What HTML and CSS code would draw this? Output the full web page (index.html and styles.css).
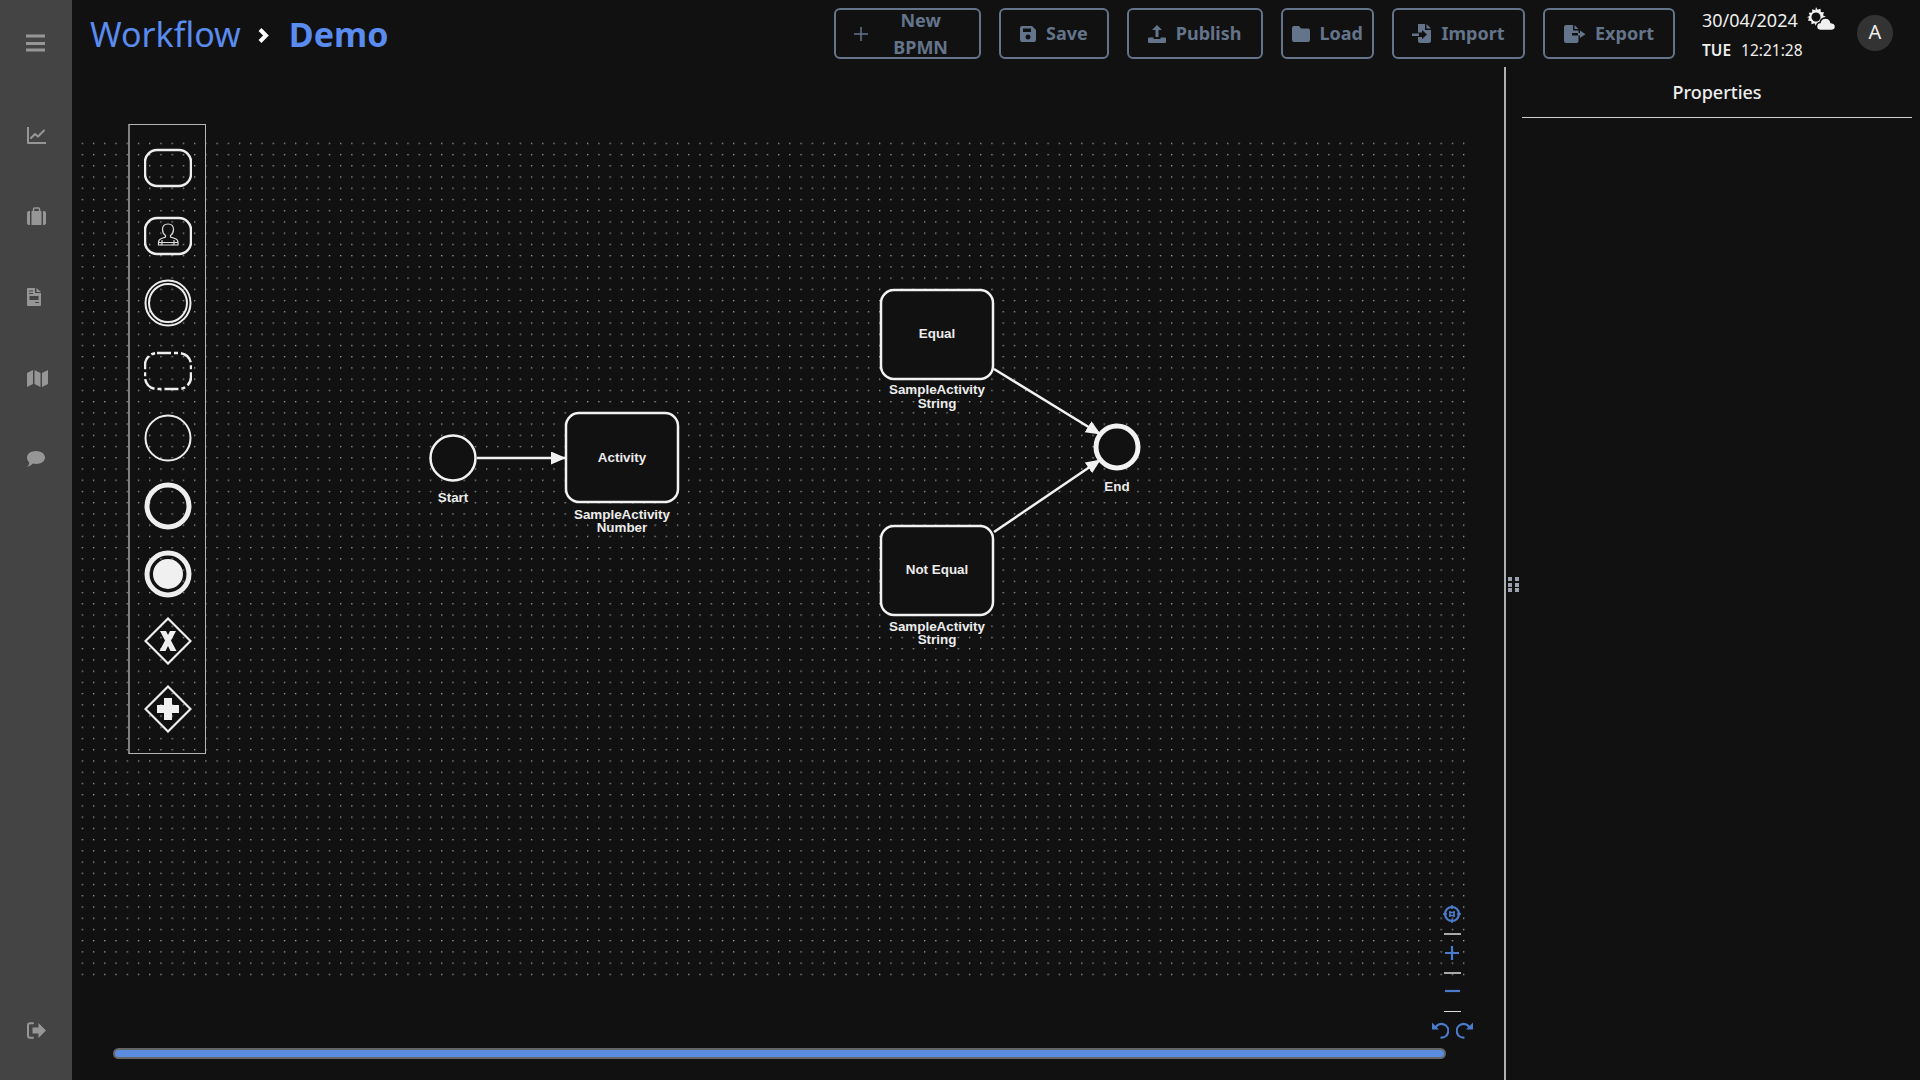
FILE: index.html
```html
<!DOCTYPE html>
<html lang="en">
<head>
    <meta charset="UTF-8">
    <meta name="viewport" content="width=device-width, initial-scale=1.0">
    <title>Workflow - Demo</title>
    <link rel="stylesheet" href="styles.css">
</head>
<body>

    <!-- Side menu -->
    <aside class="sidebar">
        <div class="menu-toggle">
            <svg width="19" height="18" viewBox="0 0 19 18"><path d="M0 2h19M0 9.500h19M0 16h19" class="ln3"/></svg>
        </div>
        <nav class="side-nav">
            <a class="side-item"><svg width="19" height="17" viewBox="0 0 19 17"><path d="M1 0v16h18M4 11l4-4 3 2.500 6-6" class="ln2"/></svg></a>
            <a class="side-item"><svg width="19" height="18" viewBox="0 0 19 18"><path d="M6.500 4V2q0-1 1-1h4q1 0 1 1v2" class="ln15"/><path d="M0 6q0-2 2-2h1v14H2q-2 0-2-2zM4.500 4h10v14h-10zM16 4h1q2 0 2 2v10q0 2-2 2h-1z" class="fill"/></svg></a>
            <a class="side-item"><svg width="14" height="18" viewBox="0 0 14 18"><path fill-rule="evenodd" d="M1 0h7v5h6v12q0 1-1 1H1q-1 0-1-1V1q0-1 1-1zM9.500 0L14 4H9.500zM2.500 8v4h9V8zM2 2.500v1h4v-1zM2 5v1h4V5zM8 14v1h4v-1z" class="fill"/></svg></a>
            <a class="side-item"><svg width="21" height="17" viewBox="0 0 21 17"><path d="M0 3l6-3v14l-6 3zM7.500 0l6 3v14l-6-3zM15 3l6-3v14l-6 3z" class="fill"/></svg></a>
            <a class="side-item"><svg width="18" height="16" viewBox="0 0 18 16"><path d="M9 0c5 0 9 2.800 9 6.500S14 13 9 13q-1.500 0-3-.4C4.500 14 2.500 15.500 0 16c1.200-1.200 2-2.600 2.300-4.600C.9 10.200 0 8.500 0 6.500 0 2.800 4 0 9 0z" class="fill"/></svg></a>
        </nav>
        <a class="side-item side-bottom"><svg width="19" height="17" viewBox="0 0 19 17"><path d="M6 1.200H3q-2 0-2 2v10.600q0 2 2 2h3" class="ln2"/><path d="M11.500 1L19 8.500 11.500 16v-4.500H5.500v-6h6z" class="fill"/></svg></a>
    </aside>

    <div class="main">

        <!-- Header -->
        <header class="topbar">
            <h1 class="crumbs">
                <span class="crumb-root">Workflow</span>
                <svg class="crumb-sep" width="11" height="15" viewBox="0 0 11 15"><path d="M2 1.500l6 6-6 6" class="ln-chev"/></svg>
                <span class="crumb-page">Demo</span>
            </h1>
            <div class="actions">
                <button class="btn btn-new" type="button">
                    <svg width="18" height="18" viewBox="0 0 18 18"><path d="M9 2v14M2 9h14" class="ln15"/></svg>
                    <span>New<br>BPMN</span>
                </button>
                <button class="btn" type="button">
                    <svg width="16" height="16" viewBox="0 0 16 16"><path fill-rule="evenodd" d="M2 0h10l4 4v10q0 2-2 2H2q-2 0-2-2V2q0-2 2-2zM3 2.500v3.500h8V2.500zM8 8.500a2.500 2.500 0 1 0 .01 0z" class="fill"/></svg>
                    <span>Save</span>
                </button>
                <button class="btn" type="button">
                    <svg width="18" height="18" viewBox="0 0 18 18"><path d="M9 0l5 5h-3.500v7h-3V5H4z" class="fill"/><path d="M0 13.500q0-1 1-1h4.500v1.500h7v-1.500H17q1 0 1 1V17q0 1-1 1H1q-1 0-1-1z" class="fill"/></svg>
                    <span>Publish</span>
                </button>
                <button class="btn btn-load" type="button">
                    <svg width="18" height="16" viewBox="0 0 18 16"><path d="M2 0h5l2 2.500h7q2 0 2 2V14q0 2-2 2H2q-2 0-2-2V2q0-2 2-2z" class="fill"/></svg>
                    <span>Load</span>
                </button>
                <button class="btn btn-import" type="button">
                    <svg width="19" height="19" viewBox="0 0 19 19"><path d="M6 0h7v6h6v11q0 2-2 2H8q-2 0-2-2v-4h4v2l5-4.500L10 6v2.500H6z" class="fill"/><path d="M14.500 0L19 4.500h-4.500zM0 9.500h7v2.500H0z" class="fill"/></svg>
                    <span>Import</span>
                </button>
                <button class="btn btn-export" type="button">
                    <svg width="22" height="18" viewBox="0 0 22 18"><path d="M2 0h7v5.500h5.500v2.500H8v2.500h6.500V16q0 2-2 2H2q-2 0-2-2V2q0-2 2-2z" class="fill"/><path d="M10.500 0l4 4h-4zM16 5.500l5.500 3.700L16 13v-2.500h-2V8h2z" class="fill"/></svg>
                    <span>Export</span>
                </button>
            </div>
            <div class="clock">
                <div class="clock-date">
                    <span>30/04/2024</span>
                    <svg width="29" height="24" viewBox="0 0 29 24"><path fill-rule="evenodd" d="M9 0l1.500 2.800 3-1 .3 3.200 3.200.3-1 3 2.800 1.500-2.800 1.500 1 3-3.200.3-.3 3.200-3-1L9 19l-1.500-2.800-3 1-.3-3.200-3.200-.3 1-3L0 10.200l2.800-1.500-1-3 3.200-.3.300-3.200 3 1zM9 5.500a4.500 4.500 0 1 0 .01 0z" class="fill-white"/><path d="M14 23.500q-4.500 0-4.500-4 0-3.500 3.500-4 1-4.500 5.500-4.500 4.500 0 5.500 4.500 4.500.5 4.500 4.200 0 3.800-4.500 3.800z" class="fill-white cloud"/></svg>
                </div>
                <div class="clock-time"><b>TUE</b><span>12:21:28</span></div>
            </div>
            <div class="avatar">A</div>
        </header>

        <div class="work">

            <!-- Diagram area -->
            <section class="canvas">
                <svg class="diagram" width="1432" height="1013" viewBox="72 67 1432 1013">
                    <defs>
                        <pattern id="dots" x="81.700" y="142.700" width="11.230" height="11.230" patternUnits="userSpaceOnUse">
                            <rect width="1.300" height="1.300" fill="#a0a0a0"/>
                        </pattern>
                        <marker id="arrow" markerWidth="15" markerHeight="14" refX="14" refY="6.500" orient="auto" markerUnits="userSpaceOnUse">
                            <path d="M0 0L15 6.500 0 13z" fill="#f2f2f2"/>
                        </marker>
                    </defs>
                    <rect x="81" y="142" width="1390" height="836" fill="url(#dots)"/>

                    <path d="M477 458H565" class="edge" marker-end="url(#arrow)"/>
                    <path d="M994 369L1100 434" class="edge" marker-end="url(#arrow)"/>
                    <path d="M994 532L1100 460" class="edge" marker-end="url(#arrow)"/>

                    <circle cx="453" cy="458" r="22.500" class="node"/>
                    <text x="453" y="502.300" class="lbl">Start</text>

                    <rect x="566" y="413" width="112" height="89" rx="13" class="node"/>
                    <text x="622" y="462" class="lbl">Activity</text>
                    <text x="622" y="518.500" class="lbl">SampleActivity</text>
                    <text x="622" y="532" class="lbl">Number</text>

                    <rect x="881" y="290" width="112" height="89" rx="13" class="node"/>
                    <text x="937" y="338" class="lbl">Equal</text>
                    <text x="937" y="394" class="lbl">SampleActivity</text>
                    <text x="937" y="407.500" class="lbl">String</text>

                    <rect x="881" y="526" width="112" height="89" rx="13" class="node"/>
                    <text x="937" y="574" class="lbl">Not Equal</text>
                    <text x="937" y="630.500" class="lbl">SampleActivity</text>
                    <text x="937" y="644" class="lbl">String</text>

                    <circle cx="1117" cy="447" r="21" class="node node-end"/>
                    <text x="1117" y="491.300" class="lbl">End</text>
                </svg>

                <!-- Shape palette -->
                <div class="palette">
                    <svg width="48" height="40" viewBox="0 0 48 40"><rect x="1" y="2" width="46" height="36" rx="12" class="shp"/></svg>
                    <svg width="48" height="40" viewBox="0 0 48 40">
                        <rect x="1" y="2" width="46" height="36" rx="12" class="shp"/>
                        <path d="M18.500 13.500c0-3.500 2-5.500 5.500-5.500s5.500 2 5.500 5.500c0 2.500-1 4.500-3 6v1.500l4.500 1.500q3 1 3 4v2.500H14.500V26.500q0-3 3-4l4-1.500v-1.500c-2-1.500-3-3.500-3-6zM18 29v-5M30 29v-5M14.500 26.500h19" class="shp-thin"/>
                    </svg>
                    <svg width="48" height="48" viewBox="0 0 48 48"><circle cx="24" cy="24" r="22.500" class="shp-ring"/><circle cx="24" cy="24" r="19" class="shp-ring"/></svg>
                    <svg width="48" height="40" viewBox="0 0 48 40"><rect x="1" y="2" width="46" height="36" rx="12" class="shp shp-dash"/></svg>
                    <svg width="48" height="48" viewBox="0 0 48 48"><circle cx="24" cy="24" r="22.500" class="shp-ring"/></svg>
                    <svg width="48" height="48" viewBox="0 0 48 48"><circle cx="24" cy="24" r="21" class="shp-thick"/></svg>
                    <svg width="48" height="48" viewBox="0 0 48 48"><circle cx="24" cy="24" r="21" class="shp-thick"/><circle cx="24" cy="24" r="15" class="fill-white"/></svg>
                    <svg width="48" height="48" viewBox="0 0 48 48"><path d="M24 1.500L46.500 24 24 46.500 1.500 24z" class="shp shp-diamond"/><path d="M16 14h6l2 4 2-4h6l-5 9.500 5.500 10.500h-6L24 29l-2.500 5h-6L21 23.500z" class="fill-white"/></svg>
                    <svg width="48" height="48" viewBox="0 0 48 48"><path d="M24 1.500L46.500 24 24 46.500 1.500 24z" class="shp shp-diamond"/><path d="M20 13h8v7h7v8h-7v7h-8v-7h-7v-8h7z" class="fill-white"/></svg>
                </div>

                <!-- Zoom controls -->
                <div class="zoom-tools">
                    <svg width="18" height="18" viewBox="0 0 18 18"><circle cx="9" cy="9" r="7" class="ln-blue"/><path d="M9 0v4M9 14v4M0 9h4M14 9h4M7 6v6M11 6v6M6 7.500h6M6 10.500h6" class="ln-blue-thin"/></svg>
                    <i class="zoom-line"></i>
                    <svg width="16" height="16" viewBox="0 0 16 16"><path d="M8 1v14M1 8h14" class="ln-blue"/></svg>
                    <i class="zoom-line zoom-line-mid"></i>
                    <svg width="16" height="16" viewBox="0 0 16 16"><path d="M1 8h15" class="ln-blue"/></svg>
                    <i class="zoom-line zoom-line-thin"></i>
                    <div class="undo-redo">
                        <svg width="17" height="17" viewBox="0 0 17 17"><path d="M3.500 5.500A6.800 6.800 0 1 1 8.500 15.500" class="ln-blue"/><path d="M0 0.500v7h7z" class="fill-blue"/></svg>
                        <svg width="17" height="17" viewBox="0 0 17 17"><path d="M13.500 5.500A6.800 6.800 0 1 0 8.500 15.500" class="ln-blue"/><path d="M17 0.500v7h-7z" class="fill-blue"/></svg>
                    </div>
                </div>

                <div class="scroll-thumb"></div>
            </section>

            <!-- Properties panel -->
            <aside class="props">
                <div class="grip">
                    <i></i><i></i><i></i><i></i><i></i><i></i>
                </div>
                <h2 class="props-title">Properties</h2>
            </aside>
        </div>
    </div>

</body>
</html>
```

FILE: styles.css
```css
* {
    box-sizing: border-box;
}
html, body {
    height: 100%;
}
body {
    margin: 0;
    display: flex;
    height: 1080px;
    overflow: hidden;
    background-color: #111;
    color: #eee;
    font-family: "Noto Sans", sans-serif;
}
/* Side menu */
.sidebar {
    width: 72px;
    flex: none;
    display: flex;
    flex-direction: column;
    background-color: #444;
    padding-bottom: 9px;
}
.menu-toggle {
    height: 84px;
    display: flex;
    align-items: center;
    justify-content: center;
    padding: 2px 1px 0 0;
}
.side-nav {
    margin-top: 10.500px;
    display: flex;
    flex-direction: column;
}
.side-item {
    height: 81px;
    display: flex;
    align-items: center;
    padding-left: 27px;
}
.side-bottom {
    margin-top: auto;
}
.sidebar .fill {
    fill: #969696;
}
.ln3, .ln2, .ln15 {
    fill: none;
    stroke: #969696;
}
.ln3 {
    stroke-width: 3;
    stroke-linecap: round;
}
.ln2 {
    stroke-width: 2;
    stroke-linecap: round;
    stroke-linejoin: round;
}
.ln15 {
    stroke-width: 1.5;
}
/* Header */
.main {
    flex: 1;
    min-width: 0;
    display: flex;
    flex-direction: column;
}
.topbar {
    height: 67px;
    flex: none;
    display: flex;
    align-items: flex-start;
    padding: 8px 27px 0 18px;
}
.crumbs {
    margin: 0;
    display: flex;
    align-items: center;
    height: 52px;
    font-size: 34px;
    line-height: 52px;
    color: #5a8bee;
}
.crumb-root {
    font-weight: 400;
}
.crumb-sep {
    margin: 3px 20px 0 17px;
}
.ln-chev {
    fill: none;
    stroke: #fff;
    stroke-width: 4;
}
.crumb-page {
    font-weight: 700;
}
.actions {
    margin-left: auto;
    display: flex;
    gap: 18px;
}
.btn {
    height: 51px;
    padding: 0 19px;
    display: flex;
    align-items: center;
    justify-content: center;
    gap: 10px;
    background: none;
    border: 2px solid #64748b;
    border-radius: 6px;
    color: #64748b;
    font-family: inherit;
    font-size: 18px;
    font-weight: 700;
    line-height: 27px;
    text-align: center;
}
.btn .fill {
    fill: #64748b;
}
.btn .ln15 {
    stroke: #64748b;
}
.btn-new {
    padding: 0 31px 0 16px;
    gap: 23px;
}
.btn-load {
    padding: 0 9px;
}
.btn-import {
    padding: 0 18.500px;
}
.btn-export {
    gap: 9px;
}
.clock {
    margin-left: 27px;
    width: 150px;
    font-size: 18px;
}
.clock-date {
    height: 27px;
    margin-top: -1px;
    display: flex;
    align-items: center;
    gap: 9px;
    line-height: 27px;
}
.clock-date svg {
    margin-top: -3px;
}
.clock-time {
    display: flex;
    gap: 10px;
    margin-top: 5px;
    font-size: 15.500px;
    line-height: 22px;
}
.clock-time b {
    font-weight: 600;
}
.fill-white {
    fill: #f0f0f0;
}
.cloud {
    stroke: #111;
    stroke-width: 1.500;
}
.avatar {
    width: 36px;
    height: 36px;
    margin: 7px 0 0 5px;
    border-radius: 50%;
    background-color: #333;
    text-align: center;
    font-size: 20px;
    line-height: 34px;
}
/* Diagram area */
.work {
    flex: 1;
    display: flex;
    min-height: 0;
}
.canvas {
    position: relative;
    flex: 1;
    min-width: 0;
    overflow: hidden;
}
.diagram {
    display: block;
}
.edge {
    fill: none;
    stroke: #f2f2f2;
    stroke-width: 2.500;
}
.node {
    fill: #111;
    stroke: #f2f2f2;
    stroke-width: 2.500;
}
.node-end {
    stroke-width: 5;
}
.lbl {
    fill: #ececec;
    font-family: "Liberation Sans", Arial, sans-serif;
    font-size: 13.400px;
    font-weight: 700;
    text-anchor: middle;
}
.palette {
    position: absolute;
    left: 56px;
    top: 57px;
    width: 78px;
    height: 630px;
    padding: 19px 0 0;
    display: flex;
    flex-direction: column;
    align-items: center;
    gap: 0;
    border: 1px solid #b4b4b4;
    border-left: 2px solid #808080;
}
.palette svg {
    flex: none;
    height: 48px;
    margin-bottom: 19.600px;
}
.shp, .shp-thin, .shp-ring, .shp-thick {
    fill: none;
    stroke: #eee;
}
.shp {
    stroke-width: 2.500;
}
.shp-thin {
    stroke-width: 1.200;
    stroke: #ddd;
}
.shp-ring {
    stroke-width: 2;
}
.shp-thick {
    stroke-width: 5;
}
.shp-diamond {
    stroke-width: 2.200;
}
.shp-dash {
    stroke-dasharray: 14 3 4 3;
}
.zoom-tools {
    position: absolute;
    left: 1368px;
    top: 838px;
    width: 24px;
    display: flex;
    flex-direction: column;
    align-items: center;
    gap: 0;
}
.zoom-tools > svg {
    display: block;
}
.zoom-line {
    display: block;
    width: 17px;
    height: 2px;
    margin: 10px 0;
    background-color: #aaa;
}
.zoom-line-mid {
    margin: 11px 0 9px;
}
.zoom-line-thin {
    height: 1px;
    margin: 12px 0 10px;
    background-color: #ddd;
}
.undo-redo {
    display: flex;
    gap: 7px;
}
.ln-blue {
    fill: none;
    stroke: #4b7ccc;
    stroke-width: 2.200;
}
.ln-blue-thin {
    fill: none;
    stroke: #4b7ccc;
    stroke-width: 1.500;
}
.fill-blue {
    fill: #4b7ccc;
}
.scroll-thumb {
    position: absolute;
    left: 41px;
    top: 981px;
    width: 1333px;
    height: 11px;
    border: 2px solid #666;
    border-radius: 6px;
    background-color: #5b8ce0;
}
/* Properties panel */
.props {
    position: relative;
    width: 416px;
    flex: none;
    padding: 0 8px 0 16px;
    border-left: 2px solid #b0b0b0;
}
.grip {
    position: absolute;
    left: 2px;
    top: 510px;
    display: grid;
    grid-template-columns: 4px 4px;
    gap: 1.500px 3px;
}
.grip i {
    display: block;
    height: 4px;
    background-color: #9ba3b0;
}
.props-title {
    margin: 0;
    height: 51px;
    border-bottom: 1px solid #cfcfcf;
    text-align: center;
    font-size: 18px;
    font-weight: 500;
    line-height: 50px;
}
```
